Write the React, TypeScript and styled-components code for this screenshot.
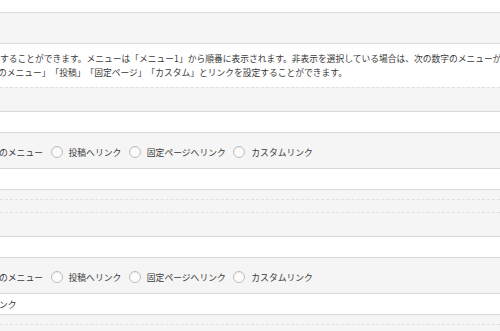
import React from "react";
import styled, { createGlobalStyle } from "styled-components";

const GlobalStyle = createGlobalStyle`
  html, body {
    margin: 0;
    padding: 0;
    background: #ffffff;
    overflow: hidden;
  }
  body {
    width: 500px;
    height: 331px;
    font-family: "Noto Sans CJK JP", "Noto Sans", sans-serif;
    color: #3a3a3a;
    text-spacing-trim: space-all;
  }
`;

const Page = styled.div`
  width: 500px;
  height: 331px;
  display: flex;
  flex-direction: column;
  overflow: hidden;
  background: #f5f5f5;
`;

const TopSpace = styled.div`
  height: 12px;
  flex: none;
  background: #ffffff;
  border-bottom: 1px solid #dcdcdc;
`;

const HeaderBar = styled.div`
  height: 30px;
  flex: none;
  background: #f5f5f5;
  border-bottom: 1px solid #dcdcdc;
`;

const Description = styled.div`
  flex: none;
  height: 43px;
  box-sizing: border-box;
  padding-top: 8px;
  background: #ffffff;
  display: flex;
  flex-direction: column;
`;

const DescLine = styled.p<{ $shift?: number }>`
  margin: 0 0 0 ${(p) => p.$shift ?? 0}px;
  font-size: 8.75px;
  line-height: 14px;
  white-space: nowrap;
  text-spacing-trim: space-all;
`;

const SectionList = styled.div`
  display: flex;
  flex-direction: column;
  gap: 12px;
`;

const Section = styled.section`
  border-top: 1px dashed #e0e0e0;
  border-bottom: 1px dashed #e0e0e0;
  padding: 23px 0 9px;
  background: #f5f5f5;
`;

const Table = styled.div`
  display: flex;
  flex-direction: column;
  border-top: 1px solid #d8d8d8;
`;

const Row = styled.div<{ $tone: "white" | "gray"; $h: number }>`
  height: ${(p) => p.$h}px;
  background: ${(p) => (p.$tone === "white" ? "#ffffff" : "#f5f5f5")};
  border-bottom: 1px solid #d8d8d8;
  display: flex;
  align-items: center;
  font-size: 8.8px;
  white-space: nowrap;
`;

const Options = styled.div`
  display: flex;
  align-items: center;
  margin-left: -1px;
  padding-top: 3px;
`;

const Option = styled.label`
  display: flex;
  align-items: center;
  gap: 6px;
  margin-right: 7.5px;
  font-size: 8.8px;
`;

const Radio = styled.span`
  width: 12px;
  height: 12px;
  box-sizing: border-box;
  border-radius: 50%;
  border: 1px solid #bdbdbd;
  background: #fdfdfd;
  box-shadow: inset 0 1px 1px rgba(0, 0, 0, 0.05);
  flex: none;
`;

const CellText = styled.span`
  margin-left: -1px;
  padding-top: 1px;
`;

const options = ["投稿へリンク", "固定ページへリンク", "カスタムリンク"];

function MenuSection({ footer }: { footer?: string }) {
  return (
    <Section>
      <Table>
        <Row $tone="white" $h={20} />
        <Row $tone="gray" $h={35}>
          <Options>
            <Option>のメニュー</Option>
            {options.map((o) => (
              <Option key={o}>
                <Radio />
                {o}
              </Option>
            ))}
          </Options>
        </Row>
        <Row $tone="white" $h={20}>
          {footer && <CellText>{footer}</CellText>}
        </Row>
      </Table>
    </Section>
  );
}

export default function App() {
  return (
    <>
      <GlobalStyle />
      <Page>
        <TopSpace />
        <HeaderBar />
        <Description>
          <DescLine>
            することができます。メニューは「メニュー1」から順番に表示されます。非表示を選択している場合は、次の数字のメニューが繰り上がって表示されます。
          </DescLine>
          <DescLine $shift={-2}>
            のメニュー」「投稿」「固定ページ」「カスタム」とリンクを設定することができます。
          </DescLine>
        </Description>
        <SectionList>
          <MenuSection />
          <MenuSection footer="ンク" />
        </SectionList>
      </Page>
    </>
  );
}
